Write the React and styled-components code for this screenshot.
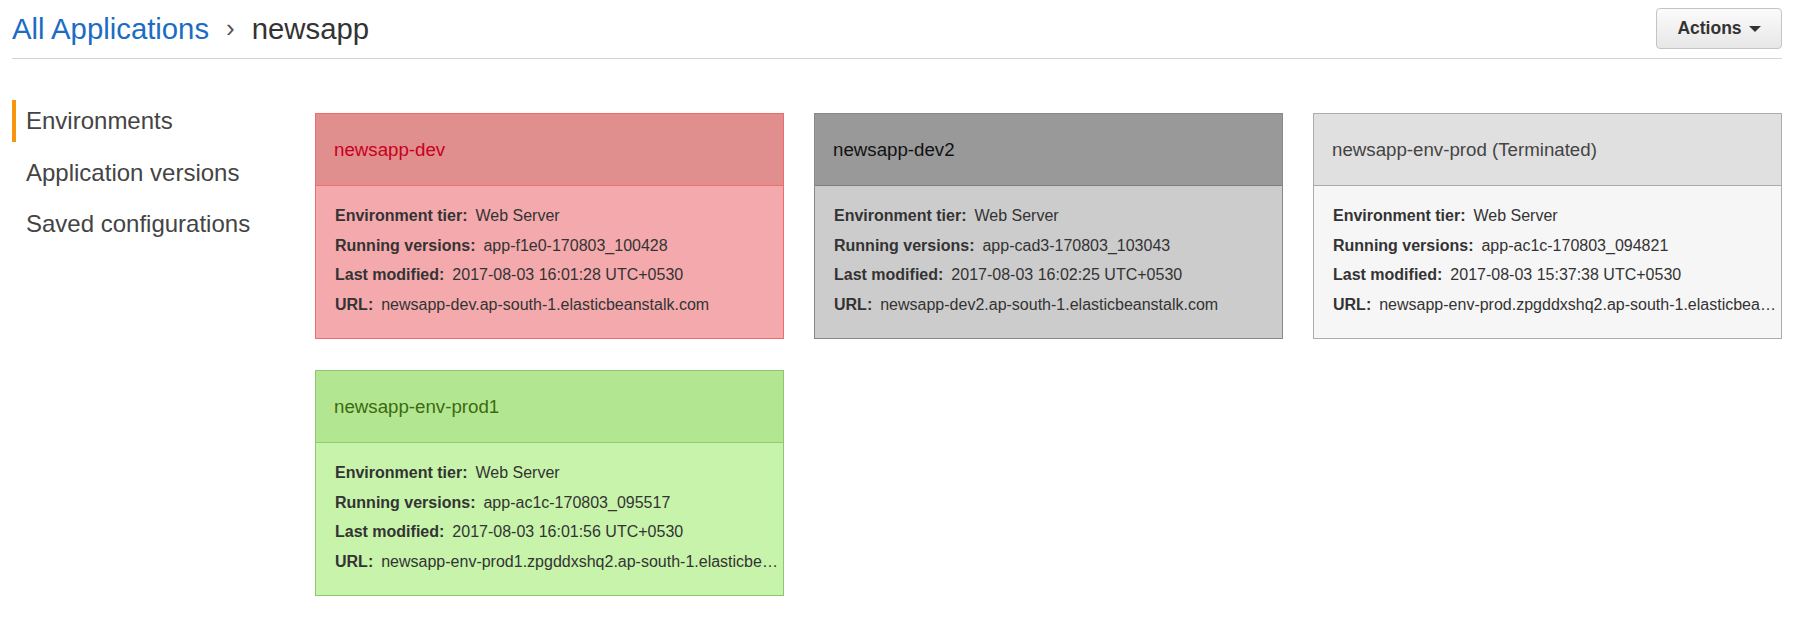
import React from 'react';
import styled, {createGlobalStyle} from "styled-components";

const GlobalStyle = createGlobalStyle`
  body {
    margin: 0;
    background: #fff;
    font-family: "Liberation Sans", Arial, sans-serif;
    color: #333;
  }
`

const Page = styled.div`
  padding: 0 22px 0 12px;
`

const TopBar = styled.div`
  display: flex;
  justify-content: space-between;
  align-items: flex-start;
  padding-top: 8px;
  height: 50px;
  border-bottom: 1px solid #d4d4d4;
`

const Breadcrumb = styled.div`
  display: flex;
  align-items: center;
  font-size: 29.3px;
  line-height: 39px;
  padding-top: 1px;

  a {
    color: #1c6cc4;
    text-decoration: none;
  }

  .sep {
    color: #555;
    margin: 0 17px 0 17px;
    font-size: 26px;
  }

  .current {
    color: #333;
  }
`

const ActionsButton = styled.button`
  display: flex;
  align-items: center;
  gap: 7px;
  height: 41px;
  width: 126px;
  justify-content: center;
  padding: 0;
  border: 1px solid #c4c4c4;
  border-radius: 4px;
  background: linear-gradient(#fbfbfb, #e7e7e7);
  font-family: inherit;
  font-size: 17.5px;
  font-weight: bold;
  color: #333;

  .caret {
    width: 0;
    height: 0;
    border-left: 6px solid transparent;
    border-right: 6px solid transparent;
    border-top: 6px solid #333;
  }
`

const Body = styled.div`
  display: flex;
  padding-top: 41px;
`

const Sidebar = styled.nav`
  width: 303px;
  flex-shrink: 0;
  display: flex;
  flex-direction: column;
  gap: 9.5px;
`

const NavItem = styled.div`
  height: 42px;
  line-height: 42px;
  font-size: 24px;
  color: #444;
  padding-left: 10px;
  border-left: 4px solid ${props => props.active ? '#f7950f' : 'transparent'};
`

const Grid = styled.div`
  margin-top: 13px;
  display: grid;
  grid-template-columns: repeat(3, 469px);
  column-gap: 30px;
  row-gap: 31px;
`

const themes = {
    red: {border: '#ef6b6e', head: '#e18e8f', body: '#f4aaad', line: '#ec7276', title: '#c7001b'},
    grey: {border: '#888888', head: '#999999', body: '#cccccc', line: '#7d7d7d', title: '#111111'},
    terminated: {border: '#acacac', head: '#e0e0e0', body: '#f6f6f6', line: '#aaaaaa', title: '#444444'},
    green: {border: '#8fc673', head: '#b3e690', body: '#c8f3aa', line: '#93c977', title: '#3b6b10'},
}

const Card = styled.div`
  border: 1px solid ${props => themes[props.tone].border};
  background: ${props => themes[props.tone].body};
  min-width: 0;
`

const CardHeader = styled.div`
  height: 71px;
  line-height: 71px;
  padding: 0 18px;
  font-size: 18.7px;
  color: ${props => themes[props.tone].title};
  background: ${props => themes[props.tone].head};
  border-bottom: 1px solid ${props => themes[props.tone].line};
`

const CardBody = styled.div`
  padding: 15px 4px 18.6px 19px;
  font-size: 16px;
`

const Row = styled.div`
  line-height: 29.6px;
  white-space: nowrap;
  overflow: hidden;
  text-overflow: ellipsis;

  b {
    margin-right: 8px;
  }
`

const envs = [
    {name: 'newsapp-dev', tone: 'red', version: 'app-f1e0-170803_100428', modified: '2017-08-03 16:01:28 UTC+0530', url: 'newsapp-dev.ap-south-1.elasticbeanstalk.com'},
    {name: 'newsapp-dev2', tone: 'grey', version: 'app-cad3-170803_103043', modified: '2017-08-03 16:02:25 UTC+0530', url: 'newsapp-dev2.ap-south-1.elasticbeanstalk.com'},
    {name: 'newsapp-env-prod (Terminated)', tone: 'terminated', version: 'app-ac1c-170803_094821', modified: '2017-08-03 15:37:38 UTC+0530', url: 'newsapp-env-prod.zpgddxshq2.ap-south-1.elasticbeanstalk.com'},
    {name: 'newsapp-env-prod1', tone: 'green', version: 'app-ac1c-170803_095517', modified: '2017-08-03 16:01:56 UTC+0530', url: 'newsapp-env-prod1.zpgddxshq2.ap-south-1.elasticbeanstalk.com'},
]

const App = () => {
    return (
        <Page>
            <GlobalStyle/>
            <TopBar>
                <Breadcrumb>
                    <a href="#">All Applications</a>
                    <span className="sep">›</span>
                    <span className="current">newsapp</span>
                </Breadcrumb>
                <ActionsButton>Actions<span className="caret"/></ActionsButton>
            </TopBar>
            <Body>
                <Sidebar>
                    <NavItem active>Environments</NavItem>
                    <NavItem>Application versions</NavItem>
                    <NavItem>Saved configurations</NavItem>
                </Sidebar>
                <Grid>
                    {envs.map(env => (
                        <Card key={env.name} tone={env.tone}>
                            <CardHeader tone={env.tone}>{env.name}</CardHeader>
                            <CardBody>
                                <Row><b>Environment tier:</b>Web Server</Row>
                                <Row><b>Running versions:</b>{env.version}</Row>
                                <Row><b>Last modified:</b>{env.modified}</Row>
                                <Row><b>URL:</b>{env.url}</Row>
                            </CardBody>
                        </Card>
                    ))}
                </Grid>
            </Body>
        </Page>
    );
};

export default App;
